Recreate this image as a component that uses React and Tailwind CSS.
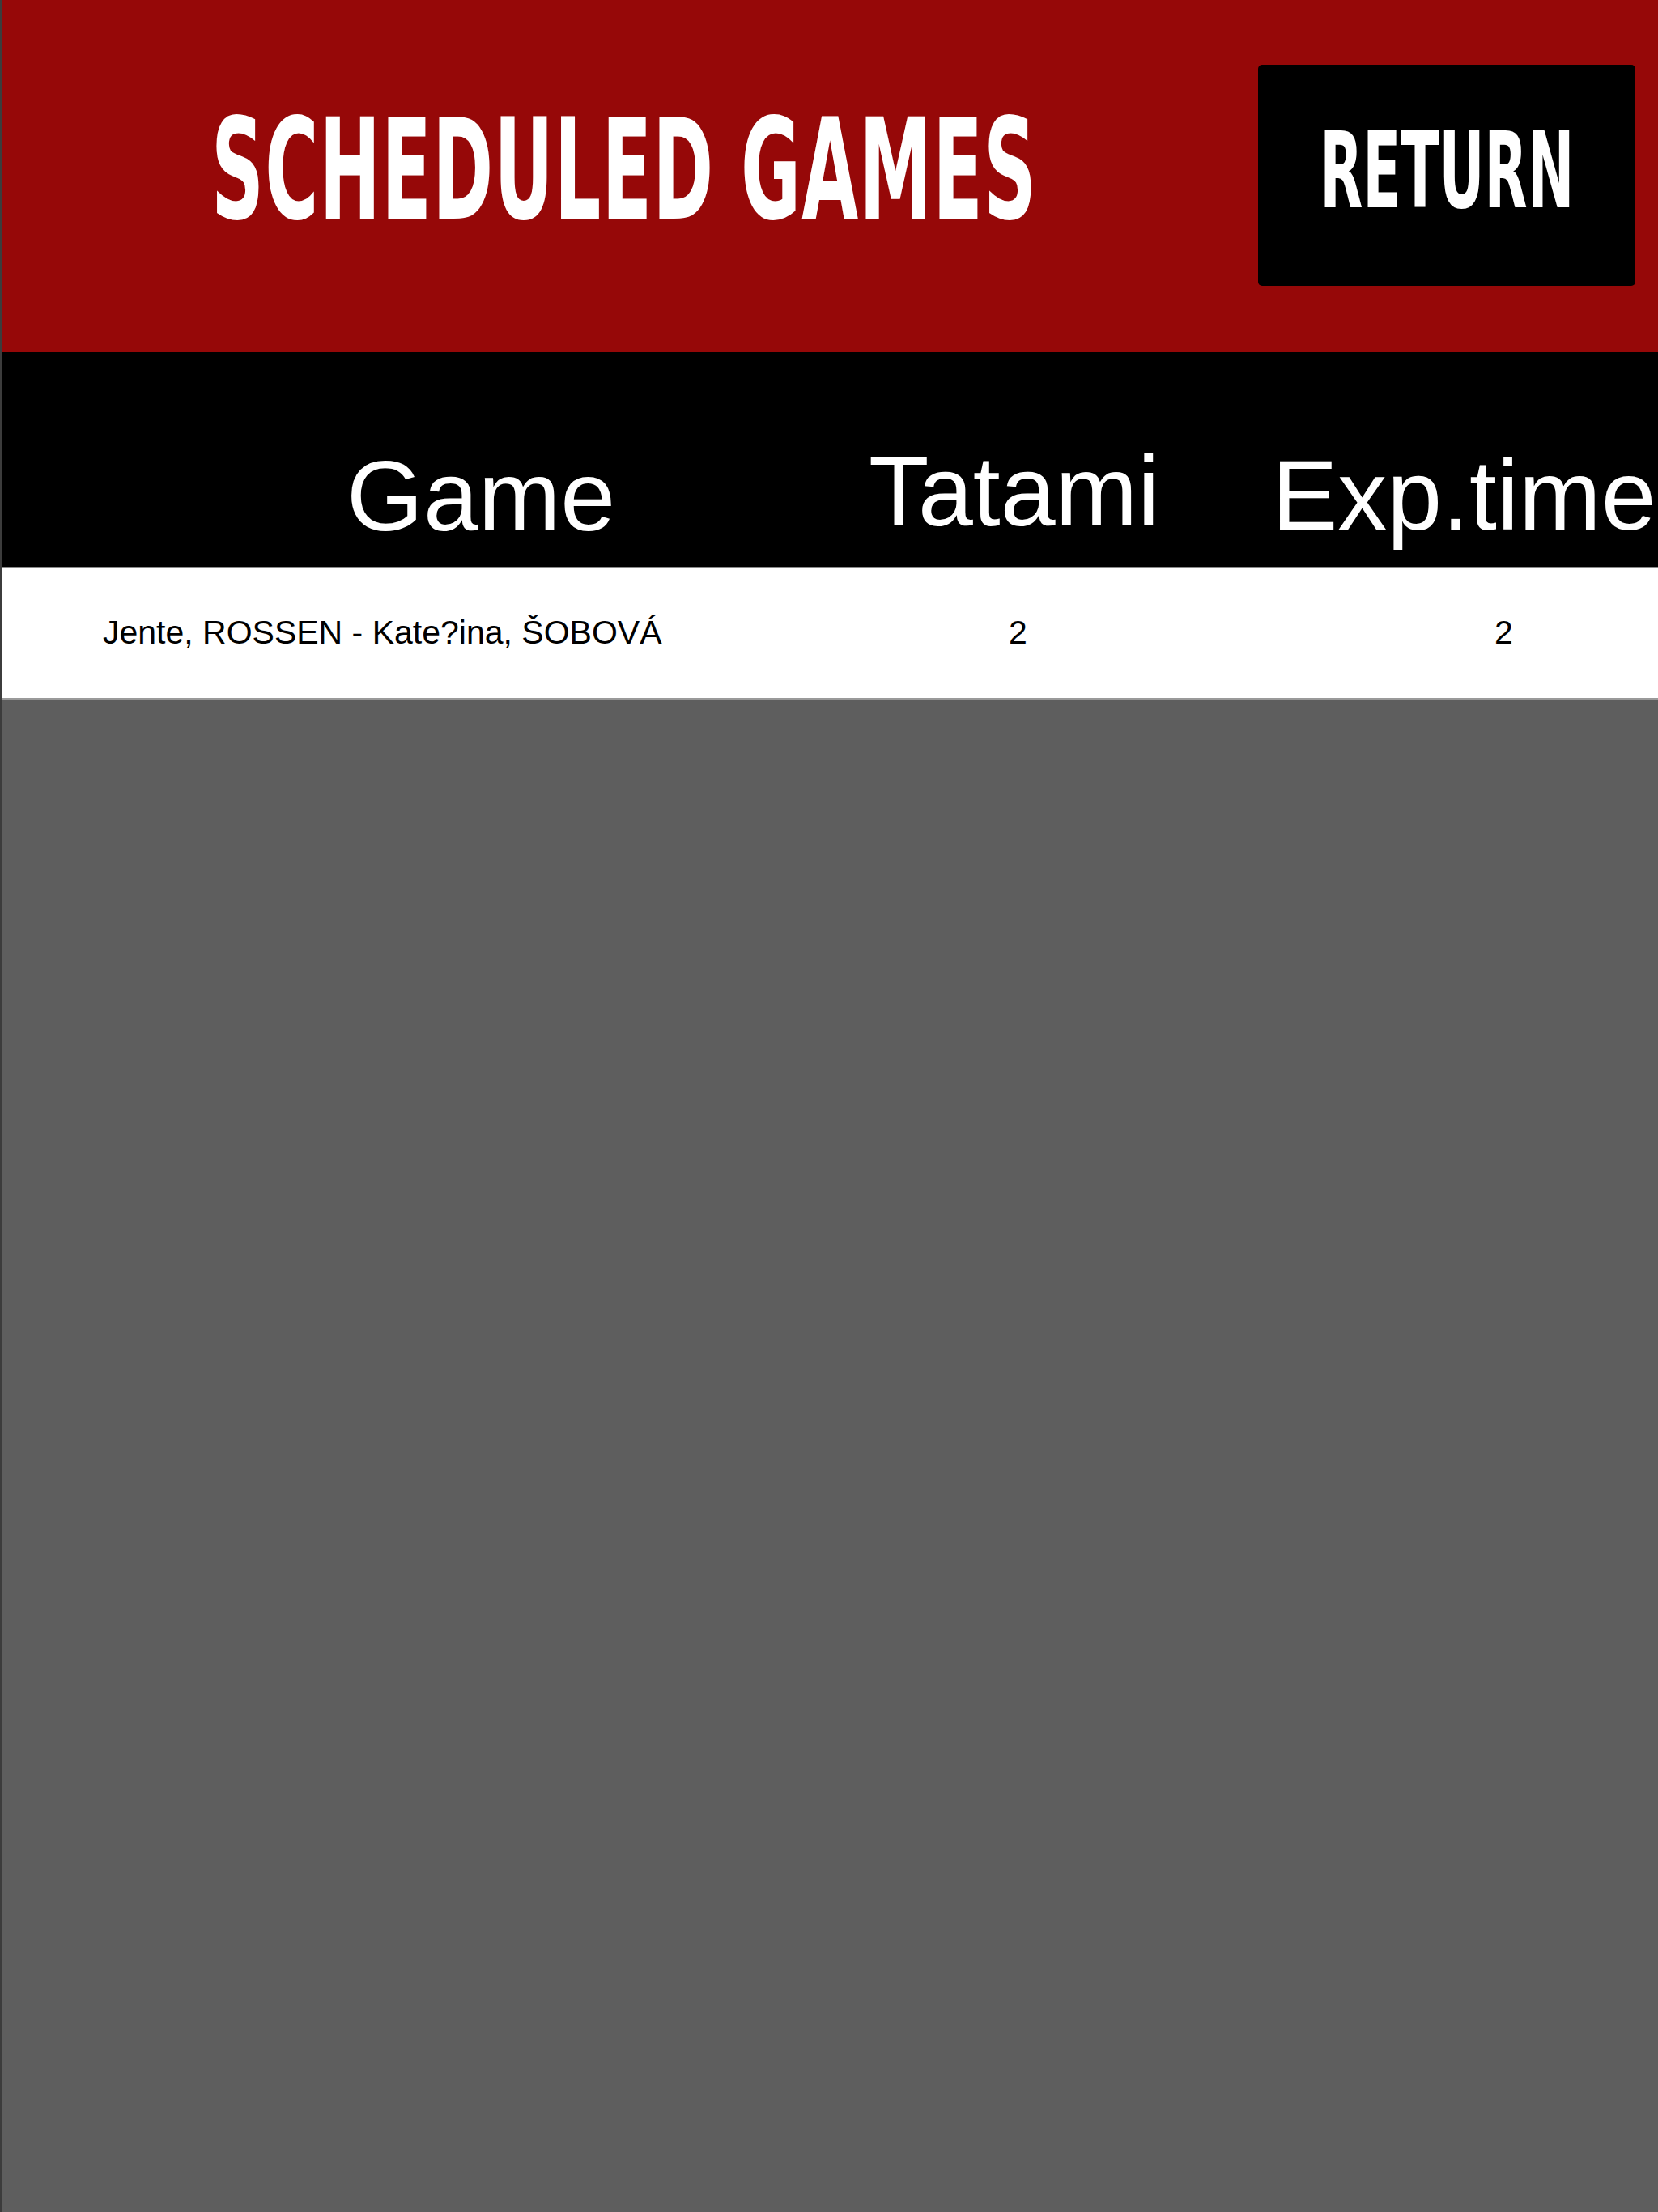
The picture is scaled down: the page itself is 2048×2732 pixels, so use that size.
const games = [
  { name: 'Jente, ROSSEN - Kate?ina, ŠOBOVÁ', tatami: 2, time: 2 },
];

const App = () => {
  return (
    <div className="w-[2048px] h-[2732px] flex flex-col bg-[#5e5e5e] border-l-[3px] border-[#3c3c3c] overflow-hidden font-['Liberation_Sans',Arial,sans-serif]">
      <div className="h-[435px] shrink-0 flex items-start bg-[#960808]">
        <div className="flex-1 min-w-0 pl-[258px] mt-[124px] whitespace-nowrap">
          <span className="inline-block origin-left scale-x-[0.58] text-[173px] leading-none font-bold text-white tracking-[2px] font-['DejaVu_Sans_Condensed','DejaVu_Sans',sans-serif]">
            SCHEDULED GAMES
          </span>
        </div>
        <button className="ml-auto mr-[28px] mt-[80px] w-[466px] h-[273px] shrink-0 rounded-[5px] bg-black flex items-center justify-center pb-[12px]">
          <span className="inline-block scale-x-[0.59] text-[130px] leading-none font-bold text-white font-['DejaVu_Sans_Condensed','DejaVu_Sans',sans-serif]">
            RETURN
          </span>
        </button>
      </div>

      <div className="h-[265px] shrink-0 grid grid-cols-[1070px_498px_1fr] items-start bg-black text-white text-[122px] leading-none">
        <div className="pl-[425px] mt-[117px]">Game</div>
        <div className="mt-[111px]">Tatami</div>
        <div className="mt-[116px] whitespace-nowrap">Exp.time</div>
      </div>

      <div className="h-[2px] shrink-0 bg-[#8a8a8a]" />

      {games.map((g, i) => (
        <div
          key={i}
          className="h-[160px] shrink-0 grid grid-cols-[1000px_509px_1fr] items-center bg-white text-black text-[41px]"
        >
          <div className="pl-[124px] whitespace-nowrap">{g.name}</div>
          <div className="text-center">{g.tatami}</div>
          <div className="pl-[334px]">{g.time}</div>
        </div>
      ))}

      <div className="h-[2px] shrink-0 bg-[#9a9a9a]" />
      <div className="flex-1" />
    </div>
  );
};

export default App;
